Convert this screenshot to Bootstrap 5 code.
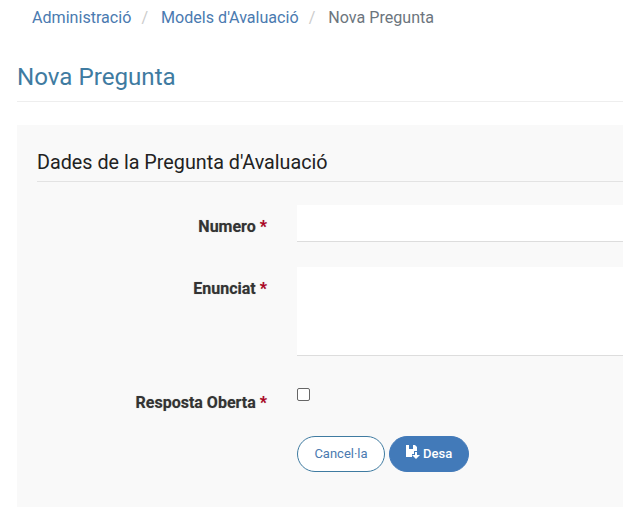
<!DOCTYPE html>
<html lang="ca">
<head>
<meta charset="utf-8">
<title>Nova Pregunta</title>
<link href="https://cdn.jsdelivr.net/npm/bootstrap@5.3.0/dist/css/bootstrap.min.css" rel="stylesheet">
<style>
html,body{height:524px;overflow:hidden;background:#fff}
body{font-family:Roboto,sans-serif;font-size:16px;color:#333}
.page-wrap{width:800px;padding-left:17px}
.crumbs{margin:0;padding:8px 15px 0;height:37px;font-size:16.100px;line-height:20px}
.crumbs .breadcrumb-item+.breadcrumb-item{padding-left:10px}
.crumbs .breadcrumb-item+.breadcrumb-item::before{padding-right:13px;color:#ccc}
.crumbs a{color:#4a7ab0;text-decoration:none}
.crumbs .active{color:#6c757d}
.page-title{margin:0;padding:24px 0 0;height:65px;font-size:24.150px;line-height:33px;font-weight:400;color:#3f7ba1;border-bottom:1px solid #eee}
.form-panel{margin-top:23px;background:#f9f9f9;height:382px;padding:20px 20px 0}
.panel-title{font-size:19.750px;font-weight:400;line-height:28px;color:#222;margin:0;padding:4px 0 0;border-bottom:1px solid #e3e3e3;height:37px}
.field-row{display:flex}
.field-label{width:260px;text-align:right;font-weight:700;color:#333;margin:0;padding-right:30px;line-height:20px;text-shadow:0 0 1px rgba(51,51,51,.35)}
.req{color:#b00020}
.field-input{flex:1;border:0;border-bottom:1px solid #ddd;border-radius:0;background:#fff;display:block}
.btn-cancel,.btn-save{font-size:13px;line-height:18px;height:36px;border-radius:18px;padding:8px 0;white-space:nowrap}
.btn-cancel{width:88px;background:#fff;border:1px solid #3f7ba1;color:#4a7ab0}
.btn-save{width:80px;background:#427ab9;border:1px solid #427ab9;color:#fff;font-weight:500}
.btn-save svg{vertical-align:-1px}
.chk{width:13px;height:13px;margin:0;border:1px solid #666;border-radius:2px;background:#fff;appearance:none;display:block}
</style>
</head>
<body>
<div class="page-wrap">
  <ol class="breadcrumb crumbs">
    <li class="breadcrumb-item"><a href="#">Administració</a></li>
    <li class="breadcrumb-item"><a href="#">Models d'Avaluació</a></li>
    <li class="breadcrumb-item active">Nova Pregunta</li>
  </ol>
  <h1 class="page-title">Nova Pregunta</h1>
  <form class="form-panel">
    <h2 class="panel-title">Dades de la Pregunta d'Avaluació</h2>
    <div class="field-row" style="margin-top:23px">
      <label class="field-label" style="padding-top:12px">Numero <span class="req">*</span></label>
      <input type="text" class="field-input" style="height:37px">
    </div>
    <div class="field-row" style="margin-top:25px">
      <label class="field-label" style="padding-top:12px">Enunciat <span class="req">*</span></label>
      <textarea class="field-input" style="height:89px;resize:none"></textarea>
    </div>
    <div class="field-row" style="margin-top:32px">
      <label class="field-label" style="padding-top:5px">Resposta Oberta <span class="req">*</span></label>
      <input type="checkbox" class="chk">
    </div>
    <div class="d-flex gap-1" style="margin:23px 0 0 260px">
      <button type="button" class="btn btn-cancel">Cancel·la</button>
      <button type="button" class="btn btn-save"><svg width="14" height="14" viewBox="0 0 14 14" fill="#fff"><path d="M0 0h9l2 2v4H8v3H6v3H0z"/><path d="M3 0h4v4H3z" fill="#427ab9"/><path d="M9 7h2v3h3l-4 4-4-4h3z"/></svg> Desa</button>
    </div>
  </form>
</div>
<script src="https://cdn.jsdelivr.net/npm/bootstrap@5.3.0/dist/js/bootstrap.bundle.min.js"></script>
</body>
</html>
